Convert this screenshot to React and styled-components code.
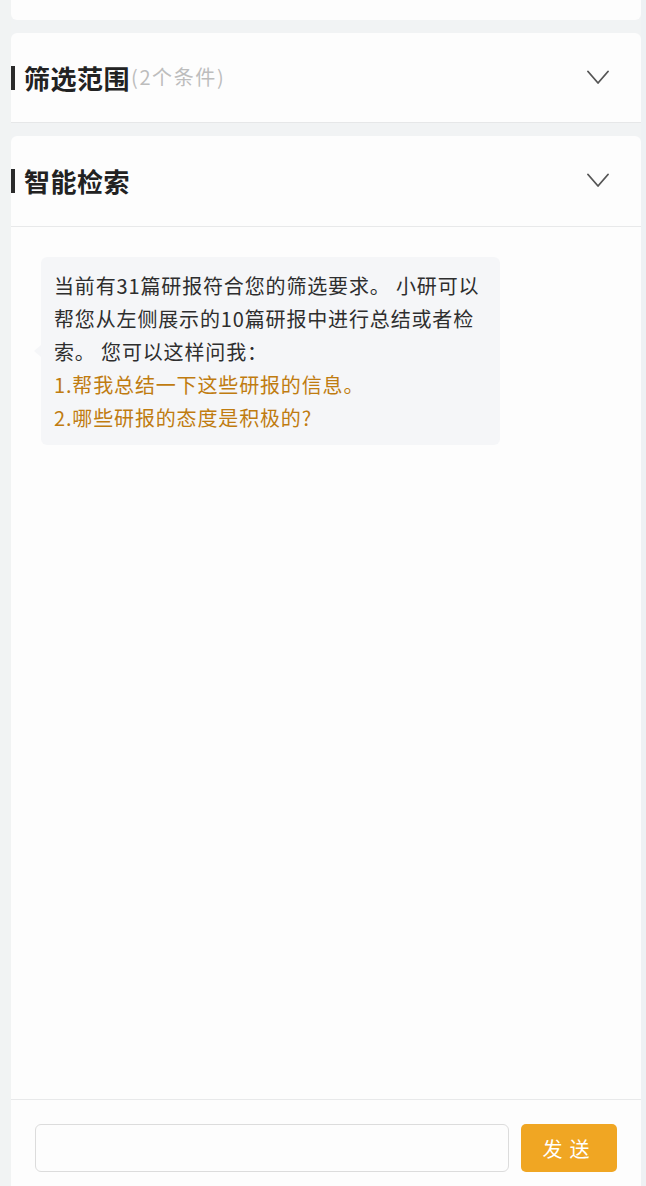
import React from "react";
import styled, { createGlobalStyle } from "styled-components";

const Global = createGlobalStyle`
  html, body { margin: 0; padding: 0; background: #f1f3f4; }
  body { font-family: "Noto Sans CJK SC", "Noto Sans", sans-serif; }
  * { box-sizing: border-box; }
`;

const Page = styled.div`
  height: 1186px;
  overflow: hidden;
  display: flex;
  background: #f1f3f4;
`;

const SideStrip = styled.div`
  width: ${(p) => p.$w}px;
  flex: none;
  background: ${(p) => p.$bg};
`;

const Column = styled.div`
  flex: 1;
  display: flex;
  flex-direction: column;
  gap: 13px;
  min-width: 0;
`;

const TopCard = styled.div`
  height: 20px;
  flex: none;
  background: #fdfdfd;
  border-radius: 0 0 6px 6px;
`;

const Card = styled.section`
  background: #fdfdfd;
  border-radius: 6px 6px 0 0;
  display: flex;
  flex-direction: column;
  flex: ${(p) => (p.$grow ? "1" : "none")};
  min-height: 0;
  border-bottom: ${(p) => (p.$grow ? "none" : "1px solid #e6e7e8")};
`;

const Header = styled.header`
  height: ${(p) => (p.$line ? 91 : 89)}px;
  flex: none;
  display: flex;
  align-items: center;
  padding-right: 32px;
  padding-bottom: ${(p) => (p.$line ? "1px" : "0")};
  border-bottom: ${(p) => (p.$line ? "1px solid #e8e9ea" : "none")};
`;

const Bar = styled.span`
  width: 4px;
  height: 24px;
  background: #2b2b2b;
  margin-right: 9px;
  flex: none;
`;

const Title = styled.h2`
  margin: 0;
  font-size: 26px;
  font-weight: 600;
  letter-spacing: 0.5px;
  color: #222;
  line-height: 1;
`;

const Sub = styled.span`
  font-size: 20px;
  color: #bdbdbd;
  font-weight: 400;
  letter-spacing: 1.6px;
  margin-left: 1px;
  margin-top: -2px;
`;

const Spacer = styled.div`
  flex: 1;
`;

const Chevron = styled.svg`
  width: 22px;
  height: 15px;
  flex: none;
`;

const ChatArea = styled.div`
  flex: 1;
  padding: 30px 30px;
  min-height: 0;
`;

const Bubble = styled.div`
  position: relative;
  width: 459px;
  background: #f5f6f8;
  border-radius: 6px;
  padding: 12px 13px 11px;
  font-size: 20px;
  letter-spacing: 0.85px;
  line-height: 33px;
  color: #333;

  &::before {
    content: "";
    position: absolute;
    left: -7px;
    top: 88px;
    border-style: solid;
    border-width: 6px 7px 6px 0;
    border-color: transparent #f5f6f8 transparent transparent;
  }
`;

const Para = styled.p`
  margin: 0;
  color: ${(p) => (p.$accent ? "#c07c10" : "#2e2e2e")};
`;

const InputBar = styled.div`
  flex: none;
  height: 87px;
  border-top: 1px solid #e8e9ea;
  display: flex;
  gap: 12px;
  padding: 24px 24px 14px;
  align-items: flex-start;
`;

const Input = styled.input`
  flex: 1;
  height: 48px;
  border: 1px solid #dcdcdc;
  border-radius: 6px;
  background: #fdfdfd;
  outline: none;
  font: inherit;
  padding: 0 12px;
`;

const SendButton = styled.button`
  width: 96px;
  height: 48px;
  border: none;
  border-radius: 5px;
  background: #f0a623;
  color: #fff;
  font-family: "Noto Sans CJK SC", sans-serif;
  font-size: 20px;
  letter-spacing: 7px;
  padding-left: 7px;
  cursor: pointer;
`;

const ChevronDown = () => (
  <Chevron viewBox="0 0 22 15" fill="none">
    <path d="M1 1.5 L11 13 L21 1.5" stroke="#555" strokeWidth="1.8" strokeLinecap="round" strokeLinejoin="round" />
  </Chevron>
);

export default function App() {
  return (
    <>
      <Global />
      <Page>
        <SideStrip $w={11} $bg="#f1f3f3" />
        <Column>
          <TopCard />
          <Card>
            <Header>
              <Bar />
              <Title>筛选范围</Title>
              <Sub>(2个条件)</Sub>
              <Spacer />
              <ChevronDown />
            </Header>
          </Card>
          <Card $grow>
            <Header $line>
              <Bar />
              <Title>智能检索</Title>
              <Spacer />
              <ChevronDown />
            </Header>
            <ChatArea>
              <Bubble>
                <Para>当前有31篇研报符合您的筛选要求。 小研可以帮您从左侧展示的10篇研报中进行总结或者检索。 您可以这样问我：</Para>
                <Para $accent>1.帮我总结一下这些研报的信息。</Para>
                <Para $accent>2.哪些研报的态度是积极的?</Para>
              </Bubble>
            </ChatArea>
            <InputBar>
              <Input type="text" />
              <SendButton>发送</SendButton>
            </InputBar>
          </Card>
        </Column>
        <SideStrip $w={5} $bg="#eef1f4" />
      </Page>
    </>
  );
}
